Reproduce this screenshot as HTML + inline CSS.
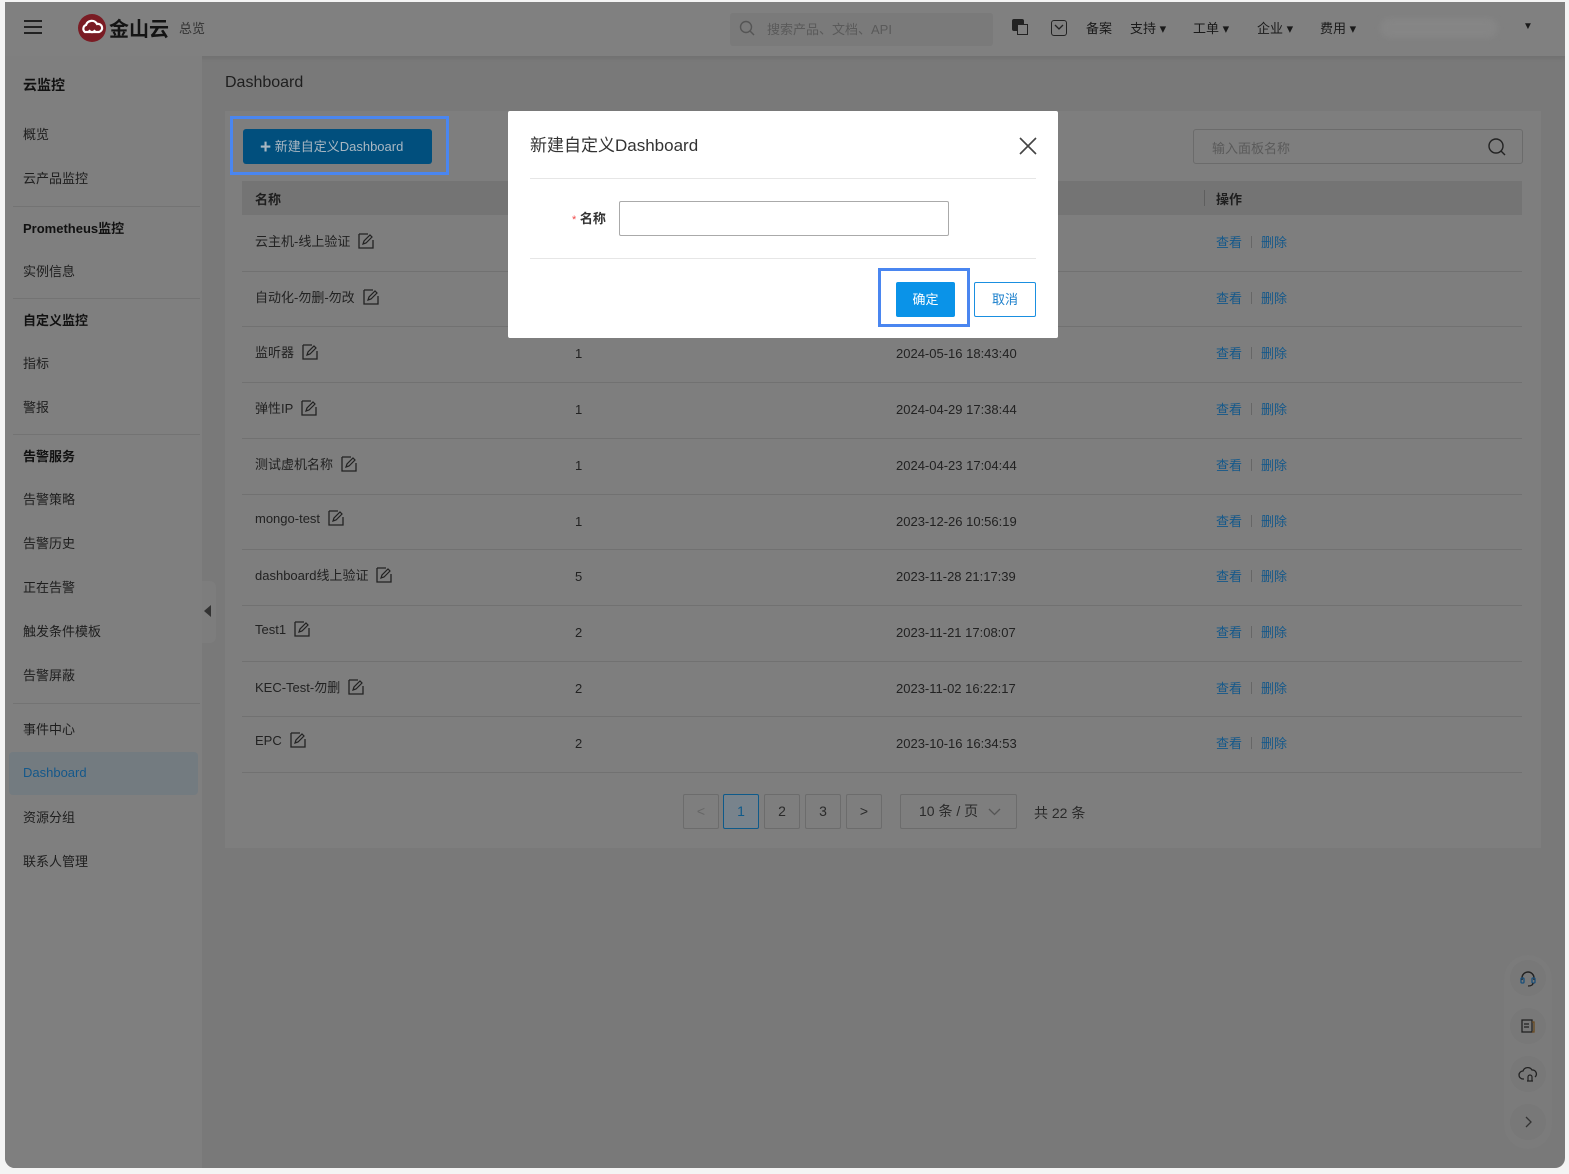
<!DOCTYPE html>
<html><head><meta charset="utf-8"><style>
*{margin:0;padding:0;box-sizing:border-box}
html,body{width:1569px;height:1174px;overflow:hidden;background:#f4f4f4;font-family:"Liberation Sans","Noto Sans CJK SC",sans-serif;color:#262626}
.win{position:absolute;left:5px;top:2px;width:1560px;height:1166px;background:#797979;border-radius:0 0 10px 10px;overflow:hidden}
.a{position:absolute;white-space:nowrap}
.hdr{position:absolute;left:0;top:0;width:1560px;height:54px;background:#808080;box-shadow:0 2px 4px rgba(0,0,0,.08)}
.side{position:absolute;left:0;top:54px;width:197px;height:1112px;background:#7f7f7f}
.side .it{position:absolute;left:18px;font-size:13px;color:#1e1e1e}
.side .b{font-weight:bold;font-size:14px;color:#111}
.side .d{position:absolute;left:8px;width:187px;height:1px;background:#737373}
.card{position:absolute;left:220px;top:109px;width:1316px;height:737px;background:#7e7e7e}
.row{position:absolute;left:237px;width:1280px;height:1px;background:#717171}
.cell{position:absolute;font-size:13px;color:#222}
.lk{color:#14588a;font-size:13px}
.pg{position:absolute;top:792px;height:35px;border:1px solid #6c6c6c;border-radius:2px;font-size:14px;color:#2a2a2a;text-align:center;line-height:33px}
.edit{display:inline-block;width:16px;height:16px;vertical-align:-3px;margin-left:8px}
.fb{position:absolute;left:1505px;width:36px;height:36px;background:#787878;border-radius:50%}
</style></head><body>
<div class="win">
 <div class="hdr">
  <div class="a" style="left:19px;top:18px;width:18px;height:2px;background:#222;box-shadow:0 6px 0 #222,0 12px 0 #222"></div>
  <svg class="a" style="left:72px;top:11px" width="30" height="30" viewBox="0 0 30 30"><circle cx="15" cy="15" r="14" fill="#7a1c24"/><path d="M8 19a4 4 0 0 1 1-7 6 6 0 0 1 11-1 4 4 0 0 1 2 8z" fill="none" stroke="#fff" stroke-width="2.2"/><path d="M12 17c2 3 4 3 6 0" stroke="#fff" stroke-width="2" fill="none"/></svg>
  <div class="a" style="left:104px;top:11px;font-size:20px;font-weight:bold;color:#141414">金山云</div>
  <div class="a" style="left:174px;top:16px;font-size:13px;color:#333">总览</div>
  <div class="a" style="left:725px;top:11px;width:263px;height:33px;background:#7a7a7a;border-radius:3px"></div>
  <svg class="a" style="left:734px;top:18px" width="16" height="16" viewBox="0 0 16 16"><circle cx="7" cy="7" r="5.5" fill="none" stroke="#555" stroke-width="1.4"/><path d="M11 11l4 4" stroke="#555" stroke-width="1.4"/></svg>
  <div class="a" style="left:762px;top:17px;font-size:13px;color:#5a5a5a">搜索产品、文档、API</div>
  <div class="a" style="left:1007px;top:17px;width:12px;height:12px;background:#222;border-radius:2px"></div>
  <div class="a" style="left:1012px;top:22px;width:11px;height:11px;border:1px solid #222;background:#808080"></div>
  <div class="a" style="left:1046px;top:18px;width:16px;height:16px;border:1.5px solid #222;border-radius:3px"></div>
  <svg class="a" style="left:1049px;top:22px" width="10" height="6" viewBox="0 0 10 6"><path d="M1 1l4 4 4-4" fill="none" stroke="#222" stroke-width="1.3"/></svg>
  <div class="a" style="left:1081px;top:16px;font-size:13px;color:#1a1a1a">备案</div>
  <div class="a" style="left:1125px;top:16px;font-size:13px;color:#1a1a1a">支持 ▾</div>
  <div class="a" style="left:1188px;top:16px;font-size:13px;color:#1a1a1a">工单 ▾</div>
  <div class="a" style="left:1252px;top:16px;font-size:13px;color:#1a1a1a">企业 ▾</div>
  <div class="a" style="left:1315px;top:16px;font-size:13px;color:#1a1a1a">费用 ▾</div>
  <div class="a" style="left:1375px;top:16px;width:118px;height:20px;background:#858585;border-radius:10px;filter:blur(3px)"></div>
  <div class="a" style="left:1518px;top:19px;font-size:10px;color:#1a1a1a">▼</div>
 </div>
 <div class="side">
  <div class="it b" style="top:19px">云监控</div>
  <div class="it" style="top:68px">概览</div>
  <div class="it" style="top:112px">云产品监控</div>
  <div class="d" style="top:150px"></div>
  <div class="it b" style="top:162px;font-size:13px">Prometheus监控</div>
  <div class="it" style="top:205px">实例信息</div>
  <div class="d" style="top:242px"></div>
  <div class="it b" style="top:254px;font-size:13px">自定义监控</div>
  <div class="it" style="top:297px">指标</div>
  <div class="it" style="top:341px">警报</div>
  <div class="d" style="top:378px"></div>
  <div class="it b" style="top:390px;font-size:13px">告警服务</div>
  <div class="it" style="top:433px">告警策略</div>
  <div class="it" style="top:477px">告警历史</div>
  <div class="it" style="top:521px">正在告警</div>
  <div class="it" style="top:565px">触发条件模板</div>
  <div class="it" style="top:609px">告警屏蔽</div>
  <div class="d" style="top:647px"></div>
  <div class="it" style="top:663px">事件中心</div>
  <div class="a" style="left:4px;top:696px;width:189px;height:43px;background:#737b80;border-radius:4px"></div>
  <div class="it" style="top:709px;color:#14588a">Dashboard</div>
  <div class="it" style="top:751px">资源分组</div>
  <div class="it" style="top:795px">联系人管理</div>
 </div>
 <div class="a" style="left:197px;top:579px;width:14px;height:62px;background:#7d7d7d;border-radius:0 6px 6px 0"></div>
 <div class="a" style="left:199px;top:603px;width:0;height:0;border-top:6px solid transparent;border-bottom:6px solid transparent;border-right:7px solid #333"></div>

 <div class="a" style="left:220px;top:72px;font-size:16px;color:#1e1e1e">Dashboard</div>
 <div class="card"></div>
 <div class="a" style="left:225px;top:114px;width:219px;height:59px;border:3px solid #4a86f0"></div>
 <div class="a" style="left:238px;top:127px;width:189px;height:35px;background:#014f7d;border-radius:3px;color:#a9b7c2;font-size:13px;line-height:35px;padding-left:17px"><b style="font-size:19px;vertical-align:-2px">+</b> 新建自定义Dashboard</div>
 <div class="a" style="left:1188px;top:127px;width:330px;height:35px;border:1px solid #6b6b6b;border-radius:3px"></div>
 <div class="a" style="left:1207px;top:136px;font-size:13px;color:#5a5a5a">输入面板名称</div>
 <svg class="a" style="left:1482px;top:135px" width="20" height="20" viewBox="0 0 20 20"><circle cx="9" cy="9" r="7" fill="none" stroke="#222" stroke-width="1.4"/><path d="M14 14l4 4" stroke="#222" stroke-width="1.4"/></svg>
 <div class="a" style="left:237px;top:179px;width:1280px;height:34px;background:#747474"></div>
 <div class="a" style="left:250px;top:187px;font-size:13px;font-weight:bold;color:#1e1e1e">名称</div>
 <div class="a" style="left:1199px;top:188px;width:1px;height:16px;background:#5e5e5e"></div>
 <div class="a" style="left:1211px;top:187px;font-size:13px;font-weight:bold;color:#1e1e1e">操作</div>
 <div id="rows"></div>

 <div class="pg" style="left:678px;width:36px;color:#666">&lt;</div>
 <div class="pg" style="left:718px;width:36px;background:#78838c;border-color:#0e5a8a;color:#0e5a8a">1</div>
 <div class="pg" style="left:759px;width:36px">2</div>
 <div class="pg" style="left:800px;width:36px">3</div>
 <div class="pg" style="left:841px;width:36px">&gt;</div>
 <div class="pg" style="left:895px;width:117px;text-align:left;padding-left:18px">10 条 / 页</div>
 <svg class="a" style="left:983px;top:806px" width="13" height="8" viewBox="0 0 13 8"><path d="M1 1l5.5 5.5L12 1" fill="none" stroke="#555" stroke-width="1.3"/></svg>
 <div class="a" style="left:1029px;top:801px;font-size:14px;color:#2a2a2a">共 22 条</div>

 <div class="a" style="left:1499px;top:953px;width:48px;height:194px;background:#7b7b7b;border-radius:24px"></div>
 <div class="fb" style="top:958px"></div>
 <svg class="a" style="left:1514px;top:967px" width="18" height="18" viewBox="0 0 18 18"><path d="M3 11V9a6 6 0 0 1 12 0v2" fill="none" stroke="#222" stroke-width="1.4"/><rect x="2" y="9" width="3" height="5" rx="1" fill="none" stroke="#1a4f7a" stroke-width="1.3"/><rect x="13" y="9" width="3" height="5" rx="1" fill="none" stroke="#1a4f7a" stroke-width="1.3"/><path d="M14 14c0 2-2 3-5 3" fill="none" stroke="#222" stroke-width="1.3"/></svg>
 <div class="fb" style="top:1006px"></div>
 <svg class="a" style="left:1514px;top:1015px" width="18" height="18" viewBox="0 0 18 18"><rect x="3" y="3" width="10" height="12" fill="none" stroke="#222" stroke-width="1.3"/><path d="M13 5h2v10h-2" fill="none" stroke="#6a4a20" stroke-width="1.3"/><path d="M5 7h5M5 10h5" stroke="#222" stroke-width="1.2"/></svg>
 <div class="fb" style="top:1054px"></div>
 <svg class="a" style="left:1513px;top:1063px" width="20" height="18" viewBox="0 0 20 18"><path d="M6 14H5a4 4 0 0 1 0-8 5 5 0 0 1 9-1 4 4 0 0 1 3 7" fill="none" stroke="#222" stroke-width="1.3"/><path d="M10 16v-4a2 2 0 0 1 4 0v4zM9 16h6" fill="none" stroke="#222" stroke-width="1.2"/></svg>
 <div class="fb" style="top:1102px"></div>
 <svg class="a" style="left:1518px;top:1114px" width="10" height="12" viewBox="0 0 10 12"><path d="M3 1l5 5-5 5" fill="none" stroke="#333" stroke-width="1.3"/></svg>

 <!-- modal -->
 <div class="a" style="left:503px;top:109px;width:550px;height:227px;background:#fff;border-radius:2px"></div>
 <div class="a" style="left:525px;top:129px;font-size:17px;color:#333">新建自定义Dashboard</div>
 <svg class="a" style="left:1013px;top:134px" width="20" height="20" viewBox="0 0 20 20"><path d="M2 2l16 16M18 2L2 18" stroke="#444" stroke-width="1.6"/></svg>
 <div class="a" style="left:525px;top:176px;width:506px;height:1px;background:#e6e6e6"></div>
 <div class="a" style="left:567px;top:206px;font-size:13px;color:#333"><span style="color:#f04848;font-size:11px">*</span> <b>名称</b></div>
 <div class="a" style="left:614px;top:199px;width:330px;height:35px;border:1px solid #aaa;border-radius:2px"></div>
 <div class="a" style="left:525px;top:256px;width:506px;height:1px;background:#e6e6e6"></div>
 <div class="a" style="left:873px;top:266px;width:92px;height:59px;border:3px solid #4a86f0"></div>
 <div class="a" style="left:891px;top:280px;width:59px;height:35px;background:#0a93e8;border-radius:2px;color:#fff;font-size:13px;text-align:center;line-height:35px">确定</div>
 <div class="a" style="left:969px;top:280px;width:62px;height:35px;border:1px solid #1a8fe0;border-radius:2px;color:#1a7fcc;font-size:13px;text-align:center;line-height:33px">取消</div>
</div>
<script>
var d=[["云主机-线上验证","",""],["自动化-勿删-勿改","",""],["监听器","1","2024-05-16 18:43:40"],["弹性IP","1","2024-04-29 17:38:44"],["测试虚机名称","1","2024-04-23 17:04:44"],["mongo-test","1","2023-12-26 10:56:19"],["dashboard线上验证","5","2023-11-28 21:17:39"],["Test1","2","2023-11-21 17:08:07"],["KEC-Test-勿删","2","2023-11-02 16:22:17"],["EPC","2","2023-10-16 16:34:53"]];
var ed='<svg class="edit" viewBox="0 0 16 16"><path d="M1 1h9M1 1v14h14V7" fill="none" stroke="#222" stroke-width="1.3"/><path d="M5 11l1-3 6-6 2 2-6 6z" fill="none" stroke="#222" stroke-width="1.2"/></svg>';
var h='';
for(var i=0;i<10;i++){var c=213+i*55.7+26;
h+='<div class="cell" style="left:250px;top:'+(c-10)+'px">'+d[i][0]+ed+'</div>';
if(d[i][1])h+='<div class="cell" style="left:570px;top:'+(c-6)+'px">'+d[i][1]+'</div><div class="cell" style="left:891px;top:'+(c-6)+'px">'+d[i][2]+'</div>';
h+='<div class="a" style="left:1211px;top:'+(c-9)+'px"><span class="lk">查看</span><span style="display:inline-block;width:1px;height:12px;background:#666;margin:0 9px;vertical-align:-1px"></span><span class="lk">删除</span></div>';
h+='<div class="row" style="top:'+Math.round(213+(i+1)*55.7)+'px"></div>';}
document.getElementById('rows').innerHTML=h;
</script>
</body></html>
